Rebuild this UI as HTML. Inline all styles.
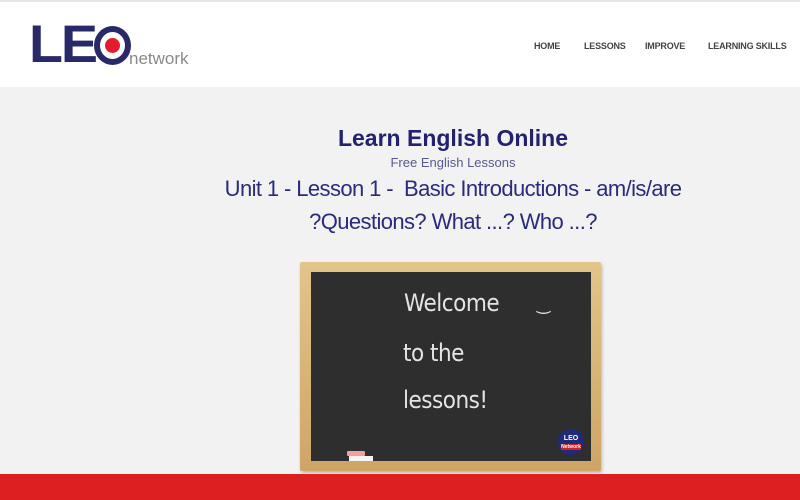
<!DOCTYPE html>
<html><head><meta charset="utf-8"><style>
*{margin:0;padding:0;box-sizing:border-box}
body{width:800px;height:500px;overflow:hidden;background:#f2f2f2;font-family:"Liberation Sans",sans-serif;position:relative}
.hdr{position:absolute;left:0;top:0;width:800px;height:87px;background:#fff;border-top:2px solid #e6e6e6}
.nav{position:absolute;top:39px;font-size:9px;font-weight:bold;color:#444;letter-spacing:-0.2px}
.c{position:absolute;left:0;width:906px;text-align:center;color:#22226e}
.board{position:absolute;left:300px;top:262px;width:301px;height:209px;background:linear-gradient(#e2c48a,#cfa566);border-radius:2px;box-shadow:1px 2px 3px rgba(0,0,0,.25)}
.inner{position:absolute;left:11px;top:10px;width:280px;height:189px;background:#2e2e2e}
.ch{position:absolute;color:#e4e4e4;font-family:"DejaVu Sans Condensed","DejaVu Sans",sans-serif;font-size:24px;font-weight:300;letter-spacing:-0.5px}
.red{position:absolute;left:0;top:474px;width:800px;height:26px;background:#dc1f1f}
</style></head><body>
<div class="hdr">
<div style="position:absolute;left:29px;top:13px;font-size:53px;font-weight:bold;color:#29296a;letter-spacing:-2px;line-height:60px;transform:scaleX(1.05);transform-origin:left">LE</div>
<div style="position:absolute;left:94px;top:24px;width:37px;height:39px;border-radius:50%;border:6px solid #29296a;background:#fff"></div>
<div style="position:absolute;left:105px;top:36px;width:15px;height:15px;border-radius:50%;background:#e31d2b"></div>
<div style="position:absolute;left:129px;top:47px;font-size:17px;color:#8a8a8a">network</div>
<div class="nav" style="left:534px">HOME</div>
<div class="nav" style="left:584px">LESSONS</div>
<div class="nav" style="left:645px">IMPROVE</div>
<div class="nav" style="left:708px">LEARNING SKILLS</div>
</div>
<div class="c" style="top:125px;font-size:23px;font-weight:bold">Learn English Online</div>
<div class="c" style="top:155px;font-size:13px;color:#5a5a90">Free English Lessons</div>
<div class="c" style="top:176px;font-size:22px;letter-spacing:-0.6px;color:#2a2a7e">Unit 1 - Lesson 1 -&nbsp; Basic Introductions - am/is/are</div>
<div class="c" style="top:209px;font-size:22px;letter-spacing:-0.6px;color:#2a2a7e">?Questions? What ...? Who ...?</div>
<div class="board"><div class="inner">
<div class="ch" style="left:93px;top:17px">Welcome</div>
<div class="ch" style="left:92px;top:67px">to the</div>
<div class="ch" style="left:92px;top:114px">lessons!</div>
<div class="ch" style="left:226px;top:22px;font-size:18px">‿</div>
<div style="position:absolute;left:247px;top:157px;width:26px;height:26px;border-radius:50%;background:#1e2a7a;color:#fff;font-size:7px;font-weight:bold;text-align:center;line-height:8px;padding-top:6px">LEO<br><span style="font-size:5px;background:#c22">Network</span></div>
</div>
<div style="position:absolute;left:47px;top:189px;width:18px;height:5px;background:#f0a0a0;border-radius:1px"></div>
<div style="position:absolute;left:49px;top:194px;width:24px;height:5px;background:#f4f4f4"></div>
</div>
<div class="red"></div>
</body></html>
